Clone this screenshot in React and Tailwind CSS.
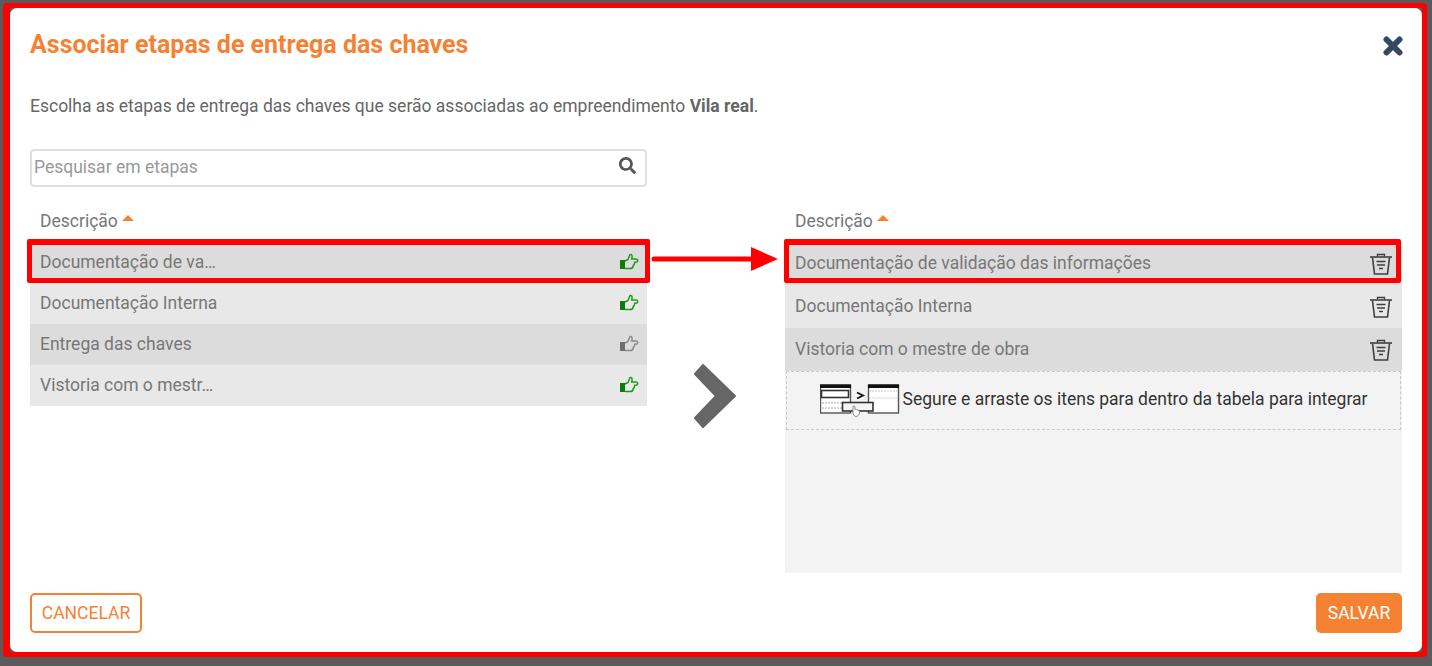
import React from "react";
import { FaSearch } from "react-icons/fa";

function Thumb({ gray }) {
  const stroke = gray ? "#8a8a8a" : "#1f9a1f";
  const cuff = gray ? "#6f6f6f" : "#0f7a0f";
  return (
    <svg width="20" height="18" viewBox="0 0 20 18" fill="none" className="mt-[-2px]">
      <rect x="1" y="7" width="5" height="9" fill={cuff} />
      <path
        d="M6 8 L9 6.5 L11 1.5 C12.5 1 13.500 2.5 13 4.5 L12.6 6 L17 6 C19 6 19.3 8.6 17.6 9 L15.6 9.3 C15.8 11 15 12 14.2 12.4 C14.2 14.5 13 15.6 11 15.6 L6 15.6"
        stroke={stroke}
        strokeWidth="1.5"
        strokeLinejoin="round"
      />
    </svg>
  );
}

function Trash() {
  return (
    <svg width="24" height="22" viewBox="0 0 24 22" fill="none" stroke="#3f3f3f">
      <path d="M1 4 H23" strokeWidth="1.6" />
      <path d="M8.5 3.5 V1.500 H15.5 V3.5" strokeWidth="1.4" />
      <path d="M3.500 4.5 L5.500 21 H18.500 L20.500 4.5" strokeWidth="1.6" />
      <path d="M7.500 8.5 H16.500 M8 12 H16 M10 15.500 H14" strokeWidth="1.600" />
    </svg>
  );
}

function DragIllustration() {
  return (
    <svg width="80" height="33" viewBox="0 0 80 33" fill="none">
      <rect x="0.5" y="1" width="30" height="28" fill="#fff" stroke="#555" strokeWidth="1.4" />
      <rect x="0" y="0.500" width="31" height="3.5" fill="#111" />
      <rect x="1.500" y="6.500" width="27" height="7" stroke="#333" strokeWidth="1.6" />
      <path d="M2 19 H29 M2 24 H29" stroke="#aaa" strokeDasharray="2 1" />
      <path d="M37 8.500 L43 11.500 L37 14.500" stroke="#111" strokeWidth="1.800" />
      <rect x="48.500" y="1" width="30" height="28" fill="#fff" stroke="#555" strokeWidth="1.4" />
      <rect x="48" y="0.500" width="31" height="3.5" fill="#111" />
      <path d="M49 7 H78 M49 14 H78" stroke="#ccc" strokeDasharray="2 1" />
      <rect x="22.500" y="18.500" width="30.500" height="8.500" fill="#f4f4f4" stroke="#333" strokeWidth="1.6" />
      <path d="M33 28 V23 C33 21.500 35 21.500 35 23 V25.500 C37 25.500 39.500 26 39.500 28 C39.500 31 37.500 32.500 36 32.500 C34 32.500 33 30 33 28 Z" fill="#fff" stroke="#888" />
    </svg>
  );
}

function Header() {
  return (
    <div className="h-[38px] flex items-center pl-[10px] pb-[4px] text-[#777] text-[17.5px]">
      <span>Descrição</span>
      <span className="ml-[4px] mb-[7px] w-0 h-0 border-x-[6px] border-x-transparent border-b-[6px] border-b-[#f58233]" />
    </div>
  );
}

function LeftRow({ text, dark, gray }) {
  return (
    <div className={`h-[41px] flex items-center justify-between pl-[10px] pr-[8px] text-[#777] text-[17.5px] ${dark ? "bg-[#dcdcdc]" : "bg-[#e8e8e8]"}`}>
      <span>{text}</span>
      <Thumb gray={gray} />
    </div>
  );
}

function RightRow({ text, dark }) {
  return (
    <div className={`h-[43px] flex items-center justify-between pl-[10px] pr-[9px] text-[#777] text-[17.5px] ${dark ? "bg-[#dcdcdc]" : "bg-[#e8e8e8]"}`}>
      <span>{text}</span>
      <Trash />
    </div>
  );
}

export default function App() {
  return (
    <div className="relative w-[1432px] h-[666px] bg-[#5b5b5b] pt-[3px] pl-[3px] pr-[5px] pb-[9px] overflow-hidden" style={{ fontFamily: "Roboto, sans-serif" }}>
      <div className="h-full rounded-[4px] border-t-[5px] border-b-[5px] border-r-[5px] border-l-[7px] border-[#ff0000] bg-[#5b5b5b]">
        <div className="h-full rounded-[7px] bg-white pl-[20px] pr-[20px] flex flex-col">
          <div className="flex items-start justify-between h-[86px] pt-[19px]">
            <h1 className="text-[25px] leading-[36px] font-bold text-[#f58233]">Associar etapas de entrega das chaves</h1>
            <svg width="20" height="20" viewBox="0 0 20 20" className="mt-[9px] mr-[-1px]">
              <path d="M3.500 3.500 L16.500 16.500 M16.500 3.500 L3.500 16.500" stroke="#34495e" strokeWidth="6" strokeLinecap="round" />
            </svg>
          </div>
          <p className="text-[#666] text-[17.5px] leading-[24px] h-[55px]">
            Escolha as etapas de entrega das chaves que serão associadas ao empreendimento <strong className="font-bold">Vila real</strong>.
          </p>
          <div className="flex flex-1">
            <div className="w-[617px] flex flex-col">
              <div className="h-[38px] rounded-[4px] border-2 border-[#e0e0e0] flex items-center justify-between pl-[2px] pr-[9px] pb-[1px] text-[17.5px] text-[#999]">
                <span>Pesquisar em etapas</span>
                <FaSearch className="text-[#555] text-[17px] mb-[4px]" />
              </div>
              <div className="h-[17px]" />
              <Header />
              <LeftRow text="Documentação de va…" dark />
              <LeftRow text="Documentação Interna" />
              <LeftRow text="Entrega das chaves" dark gray />
              <LeftRow text="Vistoria com o mestr…" />
            </div>
            <div className="w-[138px] flex justify-center pt-[215px] pr-[3px]">
              <svg width="42" height="64" viewBox="0 0 42 64" className="block">
                <path d="M9 1 L41 32 L9 63 L1 54 L22 32 L1 10 Z" fill="#666" stroke="#666" strokeLinejoin="round" strokeWidth="2" />
              </svg>
            </div>
            <div className="w-[617px] flex flex-col">
              <div className="h-[55px]" />
              <Header />
              <div className="h-[331px] bg-[#f3f3f3] flex flex-col">
                <RightRow text="Documentação de validação das informações" dark />
                <RightRow text="Documentação Interna" />
                <RightRow text="Vistoria com o mestre de obra" dark />
                <div className="h-[59px] mx-[1px] border border-dashed border-[#c9c9c9] flex items-center justify-center gap-[3px] text-[#333] text-[17.5px]">
                  <DragIllustration />
                  <span className="mb-[2px]">Segure e arraste os itens para dentro da tabela para integrar</span>
                </div>
              </div>
            </div>
          </div>
          <div className="flex items-start justify-between h-[79px] pt-[20px]">
            <button className="w-[112px] h-[40px] rounded-[5px] border-2 border-[#f58233] text-[#f58233] text-[17.5px] bg-white">CANCELAR</button>
            <button className="w-[86px] h-[40px] rounded-[5px] bg-[#f58233] text-white text-[17.5px]">SALVAR</button>
          </div>
        </div>
      </div>
      {/* annotations */}
      <div className="absolute left-[27px] top-[239px] w-[623px] h-[44px] border-[5px] border-t-[6px] border-[#ff0000] rounded-[2px]" />
      <div className="absolute left-[784px] top-[239px] w-[617px] h-[44px] border-[5px] border-t-[6px] border-[#ff0000] rounded-[2px]" />
      <svg className="absolute left-[650px] top-[245px]" width="132" height="28" viewBox="0 0 132 28">
        <path d="M4 14 H104" stroke="#ff0000" strokeWidth="5" strokeLinecap="round" />
        <path d="M101 2 L128 14 L101 26 Z" fill="#ff0000" />
      </svg>
    </div>
  );
}
